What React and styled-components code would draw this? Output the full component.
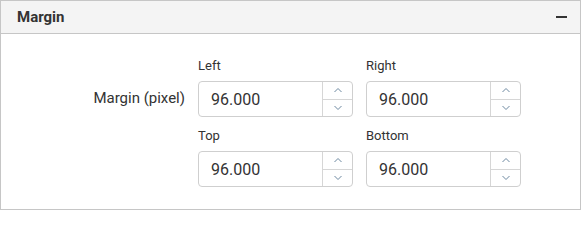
import React from "react";
import styled, { createGlobalStyle } from "styled-components";

const GlobalStyle = createGlobalStyle`
  body {
    margin: 0;
    background: #fff;
    font-family: Roboto, "Liberation Sans", sans-serif;
  }
`;

const fields = [
  { name: "Left", value: "96.000" },
  { name: "Right", value: "96.000" },
  { name: "Top", value: "96.000" },
  { name: "Bottom", value: "96.000" },
];

export default function App() {
  return (
    <>
      <GlobalStyle />
      <Panel>
        <Header>
          <Title>Margin</Title>
          <Collapse aria-label="collapse" />
        </Header>
        <Body>
          <RowLabel>Margin (pixel)</RowLabel>
          {fields.map((f) => (
            <Field key={f.name}>
              <Caption>{f.name}</Caption>
              <NumberBox>
                <Value>{f.value}</Value>
                <Spinner>
                  <SpinButton>
                    <svg width="10" height="6" viewBox="0 0 10 6">
                      <path d="M1.5 5 L5 1.5 L8.5 5" fill="none" stroke="#6d88a0" strokeWidth="1" />
                    </svg>
                  </SpinButton>
                  <SpinButton>
                    <svg width="10" height="6" viewBox="0 0 10 6">
                      <path d="M1.5 1 L5 4.5 L8.5 1" fill="none" stroke="#6d88a0" strokeWidth="1" />
                    </svg>
                  </SpinButton>
                </Spinner>
              </NumberBox>
            </Field>
          ))}
        </Body>
      </Panel>
    </>
  );
}

const Panel = styled.div`
  width: 581px;
  height: 210px;
  box-sizing: border-box;
  border: 1px solid #c6c6c6;
  background: #fff;
`;

const Header = styled.div`
  height: 33px;
  box-sizing: border-box;
  background: #f4f4f4;
  border-bottom: 1px solid #c6c6c6;
  display: flex;
  align-items: center;
  justify-content: space-between;
  padding: 0 13px 0 16px;
`;

const Title = styled.div`
  font-size: 15px;
  font-weight: 700;
  color: #333;
`;

const Collapse = styled.span`
  display: block;
  width: 11px;
  height: 2px;
  background: #333;
`;

const Body = styled.div`
  display: grid;
  grid-template-columns: 184px 155px 155px;
  grid-template-rows: auto auto;
  column-gap: 13px;
  row-gap: 11px;
  padding-top: 24px;
`;

const RowLabel = styled.div`
  grid-column: 1;
  grid-row: 1;
  align-self: end;
  height: 36px;
  line-height: 34px;
  text-align: right;
  font-size: 15px;
  color: #333;
`;

const Field = styled.div`
  display: flex;
  flex-direction: column;
  gap: 7px;
  &:nth-of-type(2) { grid-column: 2; grid-row: 1; }
  &:nth-of-type(3) { grid-column: 3; grid-row: 1; }
  &:nth-of-type(4) { grid-column: 2; grid-row: 2; }
  &:nth-of-type(5) { grid-column: 3; grid-row: 2; }
`;

const Caption = styled.div`
  font-size: 13px;
  line-height: 16px;
  color: #333;
`;

const NumberBox = styled.div`
  display: flex;
  height: 36px;
  box-sizing: border-box;
  border: 1px solid #cfcfcf;
  border-radius: 4px;
  background: #fff;
  overflow: hidden;
`;

const Value = styled.div`
  flex: 1;
  display: flex;
  align-items: center;
  padding-left: 12px;
  font-size: 16px;
  color: #333;
`;

const Spinner = styled.div`
  width: 29px;
  display: flex;
  flex-direction: column;
  border-left: 1px solid #d6d6d6;
`;

const SpinButton = styled.div`
  flex: 1;
  display: flex;
  align-items: center;
  justify-content: center;
  & + & {
    border-top: 1px solid #d6d6d6;
  }
`;
